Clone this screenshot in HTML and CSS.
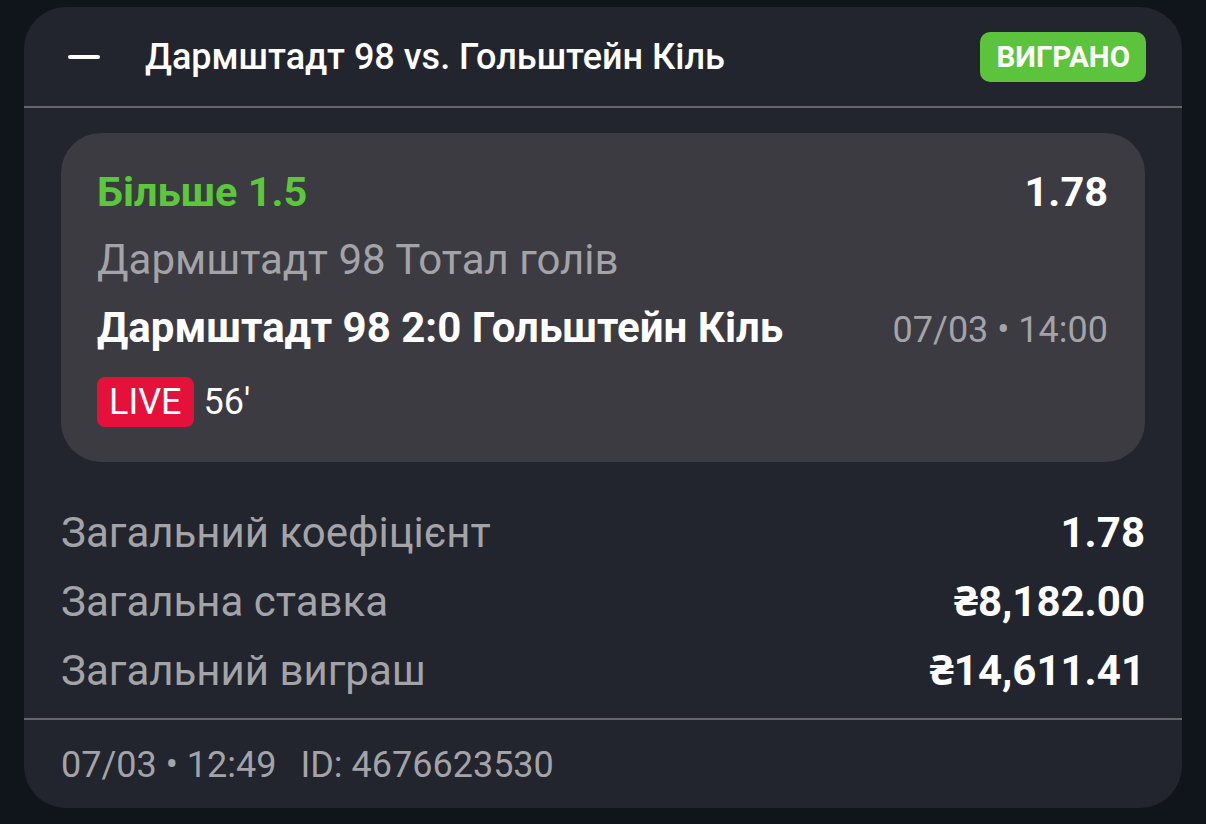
FILE: index.html
```html
<!DOCTYPE html>
<html lang="uk">
<head>
<meta charset="utf-8">
<link rel="stylesheet" href="styles.css">
</head>
<body>
<div class="card">
  <div class="header">
    <span class="minus"></span>
    <span class="title">Дармштадт 98 vs. Гольштейн Кіль</span>
    <span class="status">ВИГРАНО</span>
  </div>
  <div class="divider"></div>
  <div class="bet">
    <div class="row">
      <span class="pick">Більше 1.5</span>
      <span class="odds">1.78</span>
    </div>
    <div class="row">
      <span class="market">Дармштадт 98 Тотал голів</span>
    </div>
    <div class="row">
      <span class="event">Дармштадт 98 2:0 Гольштейн Кіль</span>
      <span class="time">07/03 • 14:00</span>
    </div>
    <div class="live-row">
      <span class="live">LIVE</span>
      <span class="minute">56'</span>
    </div>
  </div>
  <div class="summary">
    <div class="row">
      <span class="label">Загальний коефіцієнт</span>
      <span class="value">1.78</span>
    </div>
    <div class="row">
      <span class="label">Загальна ставка</span>
      <span class="value">₴8,182.00</span>
    </div>
    <div class="row">
      <span class="label">Загальний виграш</span>
      <span class="value">₴14,611.41</span>
    </div>
  </div>
  <div class="divider"></div>
  <div class="footer"><span>07/03 • 12:49</span><span class="bet-id">ID: 4676623530</span></div>
</div>
</body>
</html>
```

FILE: styles.css
```css
html, body {
  margin: 0;
  padding: 0;
  background: #10151c;
}
body {
  font-family: Roboto, "Noto Sans", sans-serif;
  color: #ffffff;
  padding: 7px 24px 0 24px;
  width: 1158px;
}
.card {
  background: #22252d;
  border-radius: 42px;
  height: 801px;
  overflow: hidden;
  display: flex;
  flex-direction: column;
}
.header {
  height: 99px;
  flex-shrink: 0;
  display: flex;
  align-items: center;
  padding: 0 36px 0 44px;
}
.minus {
  width: 32px;
  height: 4px;
  border-radius: 2px;
  background: #ffffff;
  margin-right: 45px;
}
.title {
  flex: 1;
  font-size: 36px;
  font-weight: 500;
}
.status {
  background: #5cc43c;
  border-radius: 10px;
  height: 50px;
  padding: 0 16px;
  display: flex;
  align-items: center;
  font-size: 29.5px;
  font-weight: 700;
}
.divider {
  height: 2px;
  flex-shrink: 0;
  background: #66656d;
}
.bet {
  margin: 25px 37px 0 37px;
  background: #3c3b42;
  border-radius: 40px;
  padding: 25px 37px 35px 36px;
  flex-shrink: 0;
}
.row {
  display: flex;
  justify-content: space-between;
  align-items: baseline;
  height: 68px;
  line-height: 68px;
}
.pick {
  color: #5ac83a;
  font-size: 41.5px;
  font-weight: 700;
}
.odds {
  font-size: 41.5px;
  font-weight: 700;
}
.market {
  color: #a3a3a8;
  font-size: 42px;
}
.event {
  font-size: 42px;
  font-weight: 700;
}
.time {
  color: #a3a3a8;
  font-size: 36px;
}
.live-row {
  display: flex;
  align-items: center;
  margin-top: 15px;
  height: 50px;
}
.live {
  background: #e5113a;
  border-radius: 8px;
  height: 50px;
  padding: 0 12px;
  display: flex;
  align-items: center;
  font-size: 36px;
  margin-right: 10px;
}
.minute {
  font-size: 36px;
}
.summary {
  margin-top: 36px;
  padding: 0 37px;
  height: 220px;
  flex-shrink: 0;
}
.summary .row {
  height: 69px;
  line-height: 69px;
}
.label {
  color: #a3a3a8;
  font-size: 42px;
}
.value {
  font-size: 42px;
  font-weight: 700;
}
.footer {
  color: #a3a3a8;
  font-size: 36px;
  padding: 0 37px;
  height: 88px;
  line-height: 90px;
}
.bet-id {
  margin-left: 24px;
}
```
